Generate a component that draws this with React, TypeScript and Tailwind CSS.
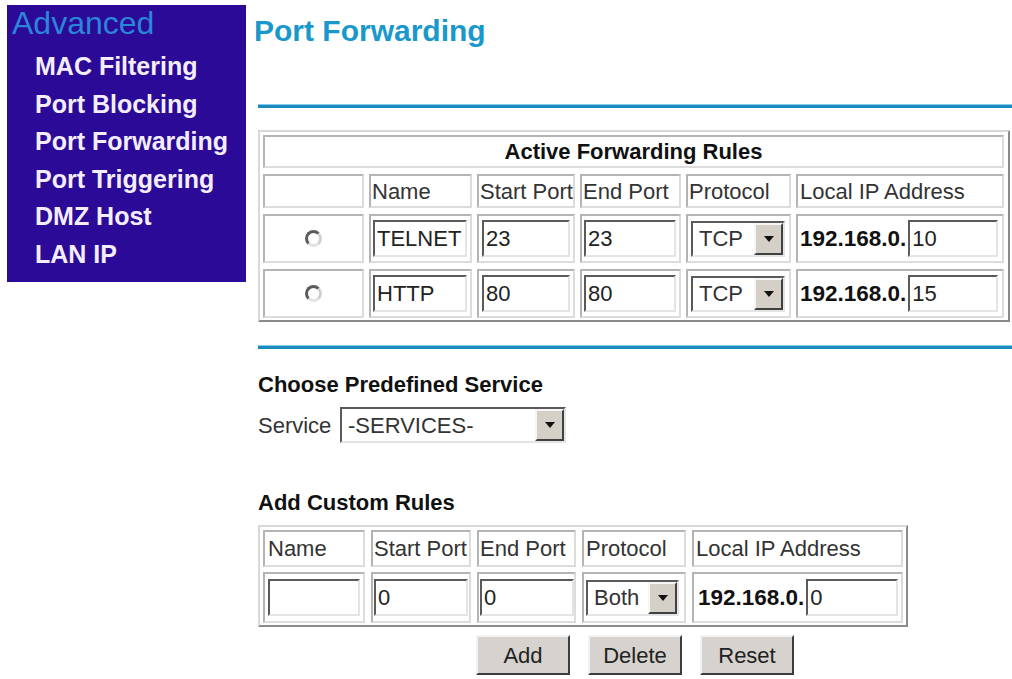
import React from "react";

const cell =
  "border-2 border-t-[#b4b4b4] border-l-[#b4b4b4] border-b-[#dcdcdc] border-r-[#dcdcdc] bg-white flex items-center";
const inset =
  "border-2 border-t-[#5a5a5a] border-l-[#5a5a5a] border-b-[#e4e4e4] border-r-[#e4e4e4] bg-white";
const outer =
  "border-2 border-t-[#d8d8d8] border-l-[#d8d8d8] border-b-[#8a8a8a] border-r-[#8a8a8a] bg-white";

const Arrow = () => (
  <svg width="10" height="6" viewBox="0 0 10 6">
    <path d="M0 0h10L5 6z" fill="#111" />
  </svg>
);

const TextField = ({ value, className }: { value: string; className: string }) => (
  <input
    readOnly
    value={value}
    className={`${inset} ${className} h-[37px] px-[2px] text-[22px] text-[#222] outline-none`}
  />
);

const Dropdown = ({ value, className }: { value: string; className: string }) => (
  <div className={`${inset} ${className} h-[36px] flex items-stretch`}>
    <span className="flex-1 flex items-center pl-[6px] text-[22px] text-[#333]">{value}</span>
    <span className="w-[29px] bg-[#d4d0c8] border-2 border-t-[#f6f6f6] border-l-[#f6f6f6] border-b-[#404040] border-r-[#404040] flex items-center justify-center">
      <Arrow />
    </span>
  </div>
);

const Radio = () => (
  <span className="w-[17px] h-[17px] rounded-full bg-white border-[3px] border-t-[#5c5c5c] border-l-[#5c5c5c] border-b-[#e2e2e2] border-r-[#d0d0d0]" />
);

const rules = [
  { name: "TELNET", start: "23", end: "23", ip: "10" },
  { name: "HTTP", start: "80", end: "80", ip: "15" },
];

const ActiveRules = () => (
  <div className={`${outer} mt-[22px] w-[752px] pt-[3px] pl-[3px] pr-[3px] pb-[2px]`}>
    <div className="grid grid-cols-[101px_103px_98px_101px_105px_208px] gap-x-[5px] gap-y-[6px] text-[22px] text-[#333]">
      <div className={`${cell} col-span-6 h-[33px] justify-center font-bold text-[#111]`}>
        Active Forwarding Rules
      </div>
      <div className={`${cell} h-[34px]`} />
      <div className={`${cell} h-[34px] pl-[1px]`}>Name</div>
      <div className={`${cell} h-[34px] pl-[1px]`}>Start Port</div>
      <div className={`${cell} h-[34px] pl-[1px]`}>End Port</div>
      <div className={`${cell} h-[34px] pl-[1px]`}>Protocol</div>
      <div className={`${cell} h-[34px] pl-[2px]`}>Local IP Address</div>
      {rules.map((r) => (
        <React.Fragment key={r.name}>
          <div className={`${cell} h-[49px] justify-center`}>
            <Radio />
          </div>
          <div className={`${cell} h-[49px] px-[2px]`}>
            <TextField value={r.name} className="w-[94px]" />
          </div>
          <div className={`${cell} h-[49px] px-[3px]`}>
            <TextField value={r.start} className="w-[88px]" />
          </div>
          <div className={`${cell} h-[49px] px-[2px]`}>
            <TextField value={r.end} className="w-[92px]" />
          </div>
          <div className={`${cell} h-[49px] px-[3px]`}>
            <Dropdown value="TCP" className="w-[94px]" />
          </div>
          <div className={`${cell} h-[49px] pl-[2px]`}>
            <span className="font-bold text-[#111] text-[22.5px]">192.168.0.</span>
            <TextField value={r.ip} className="w-[90px] ml-[2px]" />
          </div>
        </React.Fragment>
      ))}
    </div>
  </div>
);

const CustomRules = () => (
  <div className={`${outer} mt-[9px] w-[650px] pt-[3px] pl-[3px] pr-[3px] pb-[2px]`}>
    <div className="grid grid-cols-[102px_100px_99px_104px_211px] gap-x-[6px] gap-y-[5px] text-[22px] text-[#333]">
      <div className={`${cell} h-[37px] pl-[3px]`}>Name</div>
      <div className={`${cell} h-[37px] pl-[1px]`}>Start Port</div>
      <div className={`${cell} h-[37px] pl-[1px]`}>End Port</div>
      <div className={`${cell} h-[37px] pl-[2px]`}>Protocol</div>
      <div className={`${cell} h-[37px] pl-[2px]`}>Local IP Address</div>
      <div className={`${cell} h-[51px] px-[3px]`}>
        <TextField value="" className="w-[92px]" />
      </div>
      <div className={`${cell} h-[51px] px-[1px]`}>
        <TextField value="0" className="w-[94px]" />
      </div>
      <div className={`${cell} h-[51px] px-[1px]`}>
        <TextField value="0" className="w-[94px]" />
      </div>
      <div className={`${cell} h-[51px] px-[2px]`}>
        <Dropdown value="Both" className="w-[93px]" />
      </div>
      <div className={`${cell} h-[51px] pl-[4px]`}>
        <span className="font-bold text-[#111] text-[22.5px]">192.168.0.</span>
        <TextField value="0" className="w-[92px] ml-[2px]" />
      </div>
    </div>
  </div>
);

const Button = ({ label }: { label: string }) => (
  <button className="w-[94px] h-[40px] bg-[#d6d3ce] border-2 border-t-[#f2f2f2] border-l-[#f2f2f2] border-b-[#3c3c3c] border-r-[#3c3c3c] text-[22px] text-[#222]">
    {label}
  </button>
);

const Rule = ({ top }: { top: string }) => (
  <div className={`${top} h-[4px] w-full bg-[#1b8cc0] border-t border-[#86cbea]`} />
);

export default function App() {
  const menu = ["MAC Filtering", "Port Blocking", "Port Forwarding", "Port Triggering", "DMZ Host", "LAN IP"];
  return (
    <div className="min-h-[679px] w-[1012px] bg-white flex font-['Liberation_Sans',Arial,sans-serif]">
      <aside className="ml-[7px] mt-[5px] w-[239px] h-[277px] bg-[#2b0a98] pl-[5px] pb-[8px]">
        <div className="text-[32px] leading-[36px] text-[#2a86d8]">Advanced</div>
        <ul className="mt-[7px] pl-[23px]">
          {menu.map((m) => (
            <li key={m} className="text-[25px] leading-[37.6px] font-bold text-[#f4eefc]">
              {m}
            </li>
          ))}
        </ul>
      </aside>

      <main className="ml-[12px] flex-1 flex flex-col items-start">
        <h1 className="mt-[13px] -ml-[4px] text-[30px] leading-[36px] font-bold text-[#1a98cc]">Port Forwarding</h1>
        <Rule top="mt-[55px]" />

        <ActiveRules />

        <Rule top="mt-[23px]" />

        <h2 className="mt-[23px] text-[22px] leading-[26px] font-bold text-[#111]">Choose Predefined Service</h2>
        <div className="mt-[9px] flex items-center">
          <span className="text-[22px] text-[#333] w-[82px]">Service</span>
          <Dropdown value="-SERVICES-" className="w-[226px]" />
        </div>

        <h2 className="mt-[47px] text-[22px] leading-[26px] font-bold text-[#111]">Add Custom Rules</h2>
        <CustomRules />

        <div className="mt-[8px] w-full flex justify-center gap-[18px]">
          <Button label="Add" />
          <Button label="Delete" />
          <Button label="Reset" />
        </div>
      </main>
    </div>
  );
}
